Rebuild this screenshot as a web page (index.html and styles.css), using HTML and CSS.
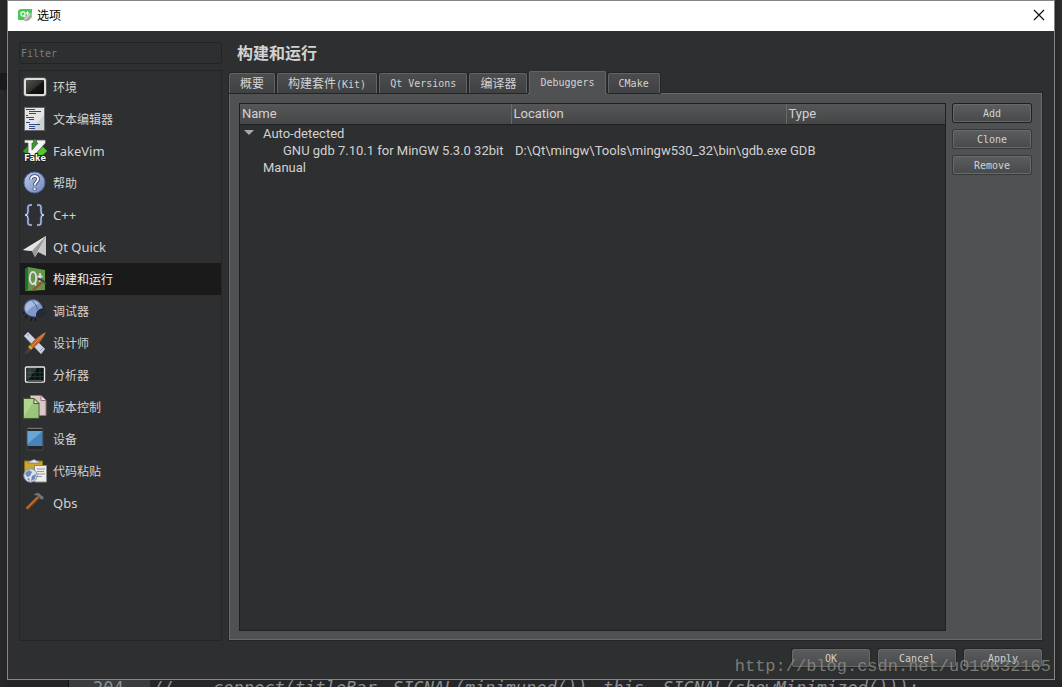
FILE: index.html
```html
<!DOCTYPE html>
<html lang="zh-CN">
<head>
<meta charset="utf-8">
<title>选项</title>
<link rel="stylesheet" href="styles.css">
</head>
<body>
<div class="gutter-mark"></div>
<section class="dialog" aria-label="选项">
  <header class="titlebar">
    <svg class="app-icon" viewBox="0 0 16 16"><path d="M3 2h12v8l-3 3H1V4z" fill="#41cd52"/><circle cx="6" cy="7" r="2.1" fill="none" stroke="#fff" stroke-width="1.2"/><path d="M6.500 8l1.500 2M10.500 4.500v4.500h1M9 6.200h3" fill="none" stroke="#fff" stroke-width="1.200"/><path d="M7 14c0-4 3-7 8-8 0 5-2 9-7 8z" fill="#c9c9c4"/><path d="M7 14c3-2 5-4 8-8-1 6-3 8-8 8z" fill="#a3a39f"/></svg>
    <h1 class="titlebar-text">选项</h1>
    <button class="close" aria-label="Close"><svg viewBox="0 0 12 12"><path d="M1 1l10 10M11 1L1 11" stroke="#111" stroke-width="1.200"/></svg></button>
  </header>
  <div class="content">
    <aside class="sidebar">
      <input class="filter" type="text" placeholder="Filter" aria-label="Filter">
      <nav class="pages">
        <a class="page" href="#env"><svg viewBox="0 0 24 24"><defs><linearGradient id="scr" x2="1" y2="1"><stop stop-color="#555"/><stop offset=".5" stop-color="#303030"/><stop offset=".55" stop-color="#161616"/><stop offset="1" stop-color="#080808"/></linearGradient></defs><rect x=".5" y="2.500" width="23" height="19" rx="3" fill="#777"/><rect x="2" y="4" width="20" height="16" rx="2" fill="url(#scr)" stroke="#deded9" stroke-width="2"/></svg>环境</a>
        <a class="page" href="#editor"><svg viewBox="0 0 24 24"><rect x="1.500" y=".5" width="20" height="23" fill="#e4e4e4" stroke="#666"/><path d="M21 8v15H8z" fill="#cfcfcf"/><path d="M3 2.500h9M6 4.500h12M6 6.500h7M3 8.500h2M3 10.500h8M6 12.500h5M3 15.500h4M6 17.500h11M6 19.500h6M6 21.500h6" stroke="#2e4a84"/></svg>文本编辑器</a>
        <a class="page latin" href="#vim"><svg viewBox="0 0 24 24"><path d="M12 0l12 12-12 12L0 12z" fill="#28a51c"/><path d="M15 3l9 9-9 8z" fill="#52c82e"/><path d="M1.500 1h9v3H9v7l6-7h-1.500V1h9v3L11 17H5V4H1.500z" fill="#f4f4f4" stroke="#555" stroke-width=".8"/><text class="vim-label" x="12" y="21.500" text-anchor="middle">Fake</text></svg>FakeVim</a>
        <a class="page" href="#help"><svg viewBox="0 0 24 24"><defs><linearGradient id="ball" x2="1" y2="1"><stop stop-color="#bdcbea"/><stop offset="1" stop-color="#6f87bd"/></linearGradient></defs><circle cx="11.500" cy="11.500" r="10.500" fill="url(#ball)" stroke="#52699e"/><path d="M8 8.500c0-5 8-4.500 7 .2-.4 2.300-3.400 2.800-3.400 5.800M11.600 16.800v2.400" fill="none" stroke="#30415f" stroke-width="3.600"/><path d="M8 8.500c0-5 8-4.500 7 .2-.4 2.300-3.400 2.800-3.400 5.500M11.600 17v2" fill="none" stroke="#f5f7fb" stroke-width="2"/></svg>帮助</a>
        <a class="page latin" href="#cpp"><svg viewBox="0 0 24 24"><path d="M9 2H7Q5 2 5 4v5q0 3-3 3 3 0 3 3v5q0 2 2 2h2M14 2h2q2 0 2 2v5q0 3 3 3-3 0-3 3v5q0 2-2 2h-2" fill="none" stroke="#465a8a" stroke-width="2.600"/><path d="M9 2H7Q5 2 5 4v5q0 3-3 3 3 0 3 3v5q0 2 2 2h2M14 2h2q2 0 2 2v5q0 3 3 3-3 0-3 3v5q0 2-2 2h-2" fill="none" stroke="#d9e2f3"/></svg>C++</a>
        <a class="page latin" href="#quick"><svg viewBox="0 0 24 24"><path d="M23 1v20l-8-4-3 5-3-6-9-1z" fill="#c7c7c5"/><path d="M23 1L0 15l9 1z" fill="#e5e5e3"/><path d="M23 1L9 16l3 6z" fill="#999"/><path d="M23 1l-8 16-3 5z" fill="#efefed"/></svg>Qt Quick</a>
        <a class="page selected" href="#build" aria-current="page"><svg viewBox="0 0 24 24"><path d="M2 2l3-2 17 3v20L2 24z" fill="#5f9b45"/><path d="M2 2l3-2v23l-3 1z" fill="#13752e"/><path d="M5 1l16 3v17L5 23z" fill="#65934f"/><ellipse cx="10" cy="11" rx="3.200" ry="6" fill="none" stroke="#d9ddd5" stroke-width="2"/><path d="M11 15l3 5M17 6v9M14.500 9.500h5" stroke="#d9ddd5" stroke-width="1.800"/><path d="M10 23l9-8" stroke="#9c532b" stroke-width="2.500"/><path d="M15 12q4 0 8 5" fill="none" stroke="#444" stroke-width="2"/></svg>构建和运行</a>
        <a class="page" href="#debugger"><svg viewBox="0 0 24 24"><path d="M2 12l-2 3M5 16l-3 3M9 18l-1 4M13 18l-1 4M20 9l1-2" stroke="#16191e" stroke-width="1.300"/><path d="M1 10Q1 3 7 1q6-2 10 3 4 4 3 8l-6 6Q5 18 2 13z" fill="#8098ca" stroke="#43547d" stroke-width=".8"/><path d="M2 10Q2 4 8 2q5-1 8 3-7 1-12 8z" fill="#a9bbdf"/><path d="M9 1.500Q14 6 15 11" fill="none" stroke="#52658f"/><path d="M13 18q-1-7 7-9l3 4 1 3-4 1-2 2z" fill="#222a37"/></svg>调试器</a>
        <a class="page" href="#designer"><svg viewBox="0 0 24 24"><path d="M5 1l17 17-4 5L1 5z" fill="#cbd3e3" stroke="#8490a6" stroke-width=".7"/><path d="M20 17l-3 3M6 3L4 5" stroke="#8a96ad"/><path d="M23 1Q14 5 7 14l3 3Q19 11 23 1" fill="#b8642b"/><path d="M22 2L9 15" stroke="#dc925c"/><path d="M7 14l3 3-2 2-3-3z" fill="#d7a734"/><path d="M5 16l3 3q-2 4-8 4 4-2 5-7" fill="#45413b"/></svg>设计师</a>
        <a class="page" href="#analyzer"><svg viewBox="0 0 24 24"><rect x="2.500" y="4" width="19" height="15" rx="1" fill="#0d1314" stroke="#e8e8e8" stroke-width="1.400"/><path d="M4 19l1-1h14l2 1" stroke="#aaa"/><path d="M7 5v13M12 5v13M17 5v13M4 9.500h16M4 13.500h16" stroke="#264644" stroke-width=".6"/><path d="M4 5h10L5 17H4z" fill="#fff" opacity=".15"/></svg>分析器</a>
        <a class="page" href="#vcs"><svg viewBox="0 0 24 24"><path d="M7.500.5H18l5 5v15H7.500z" fill="#ddc6c8" stroke="#8c7678"/><path d="M18 .5v5h5" fill="#f2e4e5" stroke="#8c7678"/><path d="M.5 3.500H11l5 5v14.800H.5z" fill="#b2d58c" stroke="#405c2d"/><path d="M1 22L12 4l3 5v13z" fill="#8fbd73" opacity=".65"/><path d="M11 3.500v5h5z" fill="#e1efcd" stroke="#405c2d"/></svg>版本控制</a>
        <a class="page" href="#devices"><svg viewBox="0 0 24 24"><rect x="4" y="1" width="16" height="22" rx="1" fill="#25272a" stroke="#4f5356" stroke-width=".7"/><rect x="4.500" y="4" width="15" height="15" fill="#4685bb"/><path d="M4.500 4h15L4.500 17z" fill="#6ba5d3"/><path d="M5 1.500h14" stroke="#71767a"/></svg>设备</a>
        <a class="page" href="#paste"><svg viewBox="0 0 24 24"><rect x="1.500" y="2" width="18" height="14" fill="#cda62b" stroke="#8a6c12"/><path d="M5 4q0-2 3-2 3-3 6 0 3 0 3 2z" fill="#eee" stroke="#777" stroke-width=".8"/><path d="M11.500 6.500H23.500V23H11.500z" fill="#ededed" stroke="#888"/><path d="M14 10h8M14 12.500h7M14 15h8M14 17.500h5" stroke="#999"/><circle cx="7.500" cy="16.500" r="6.700" fill="#d8e0ed" stroke="#8090ac"/><path d="M2 14l4-3 3 2-2 4-3 1zM9 17l4-2-1 5-4 2zM4 20l2-1 1 3z" fill="#7187b0"/></svg>代码粘贴</a>
        <a class="page latin" href="#qbs"><svg viewBox="0 0 24 24"><path d="M4 18L16 6" stroke="#753a16" stroke-width="3.500"/><path d="M3.500 17.500L16 5" stroke="#c86a2b" stroke-width="1.800"/><path d="M11 3q5-3 7 1l3 2-1 3-3-1-2-3-4-1" fill="#72787b" stroke="#36393b" stroke-width=".7"/></svg>Qbs</a>
      </nav>
    </aside>
    <main class="main">
      <h2 class="heading">构建和运行</h2>
      <div class="tabs" role="tablist">
        <button class="tab" role="tab">概要</button>
        <button class="tab" role="tab">构建套件<span class="mono">(Kit)</span></button>
        <button class="tab mono" role="tab">Qt Versions</button>
        <button class="tab" role="tab">编译器</button>
        <button class="tab mono active" role="tab" aria-selected="true">Debuggers</button>
        <button class="tab mono" role="tab">CMake</button>
      </div>
      <div class="panel" role="tabpanel">
        <div class="tree">
          <table class="tree-table">
            <colgroup><col class="col-name"><col class="col-location"><col></colgroup>
            <thead><tr><th>Name</th><th>Location</th><th>Type</th></tr></thead>
            <tbody>
              <tr><td class="group"><svg class="arrow" viewBox="0 0 10 6"><path d="M0 0h10L5 5z" fill="#a9a9a9"/></svg>Auto-detected</td><td></td><td></td></tr>
              <tr><td class="child">GNU gdb 7.10.1 for MinGW 5.3.0 32bit</td><td>D:\Qt\mingw\Tools\mingw530_32\bin\gdb.exe</td><td>GDB</td></tr>
              <tr><td class="leaf">Manual</td><td></td><td></td></tr>
            </tbody>
          </table>
        </div>
        <div class="actions">
          <button class="btn default">Add</button>
          <button class="btn">Clone</button>
          <button class="btn">Remove</button>
        </div>
      </div>
    </main>
  </div>
  <footer class="footer">
    <button class="btn">OK</button>
    <button class="btn">Cancel</button>
    <button class="btn">Apply</button>
  </footer>
</section>
<div class="code-line"><span class="line-no">204</span><span>//</span><span>connect(titleBar,</span><span>SIGNAL(minimuned()),</span><span>this,</span><span>SIGNAL(showMinimized()));</span></div>
<div class="watermark">http://blog.csdn.net/u010632165</div>
</body>
</html>
```
FILE: styles.css
```css
* { box-sizing: border-box; }
body {
  margin: 0;
  height: 100vh;
  display: flex;
  flex-direction: column;
  overflow: hidden;
  position: relative;
  background: linear-gradient(90deg, #29292b, #242426 8px, #242426 calc(100% - 8px), #2c2d2f);
  color: #d2d2d2;
  font: 12px "Noto Sans", "Noto Sans CJK SC", sans-serif;
}
button { font: inherit; color: inherit; cursor: default; }
.mono, .btn, .filter { font-family: "DejaVu Sans Mono", monospace; font-size: 10px; }
.gutter-mark { position: absolute; left: 0; top: 73px; width: 7px; height: 17px; background: #1a1a1b; }
.dialog {
  flex: 1;
  min-height: 0;
  margin: 0 7px;
  display: flex;
  flex-direction: column;
  background: #2e2f30;
  border: 1px solid #868484;
}
.titlebar { display: flex; align-items: center; height: 30px; padding: 0 9px 2px; background: #fff; color: #000; }
.app-icon { width: 16px; height: 16px; }
.titlebar-text { flex: 1; margin: 0 0 0 4px; font-size: 12px; font-weight: 400; }
.close { display: flex; padding: 0; border: 0; background: none; }
.close svg { width: 12px; height: 12px; }
.content { flex: 1; min-height: 0; display: flex; gap: 7px; padding: 11px 12px 0 11px; }
.sidebar { width: 203px; display: flex; flex-direction: column; gap: 6px; }
.filter {
  height: 22px;
  padding: 0 1px;
  color: #d2d2d2;
  background: #2e2f30;
  border: 1px solid #232324;
  border-radius: 3px;
  outline: 0;
}
.filter::placeholder { color: #7c7c7c; opacity: 1; }
.pages { flex: 1; margin-bottom: -1px; border: 1px solid #242526; }
.page { display: flex; align-items: center; gap: 6px; height: 32px; padding-left: 3px; color: #d2d2d2; text-decoration: none; }
.page svg { width: 24px; height: 24px; }
.page.selected { color: #eee; background: #1a1a1a; }
.page.latin, .tree-table { font-size: 13px; }
.vim-label { font: 700 9px "DejaVu Sans Mono", monospace; fill: #fff; stroke: #222; stroke-width: 2px; paint-order: stroke; }
.main { flex: 1; min-width: 0; display: flex; flex-direction: column; }
.heading { height: 29px; margin: 0; padding-left: 8px; font-size: 16px; font-weight: 700; line-height: 22px; }
.tabs { position: relative; z-index: 1; display: flex; align-items: flex-end; gap: 2px; height: 22px; }
.tab {
  height: 20px;
  padding: 0 10px;
  line-height: 18px;
  background: linear-gradient(#4b4c4d, #404142);
  border: 1px solid #626364;
  border-bottom: 0;
  border-radius: 2px 2px 0 0;
  box-shadow: 0 0 0 1px #242526;
}
.tab span { line-height: 1; }
.tab.active { height: 23px; margin-bottom: -1px; background: #505152; box-shadow: none; }
.panel {
  flex: 1;
  min-height: 0;
  display: flex;
  gap: 7px;
  padding: 9px 10px 8px 9px;
  background: #505152;
  border: 1px solid #6a6b6c;
  outline: 1px solid #242526;
}
.tree { flex: 1; min-width: 0; background: #2e2f30; border: 1px solid #1f2021; }
.tree-table { width: 100%; table-layout: fixed; border-collapse: collapse; font-family: Roboto, sans-serif; }
.col-name { width: 271px; }
.col-location { width: 275px; }
.tree-table th {
  height: 20px;
  padding: 0 2px;
  font-weight: 400;
  line-height: 19px;
  text-align: left;
  background: linear-gradient(#555657, #454647);
  border-right: 1px solid #68696a;
  border-bottom: 1px solid #202122;
}
.tree-table th:last-child { border-right: 0; }
.tree-table td { height: 17px; padding: 0 4px; line-height: 17px; white-space: nowrap; }
.tree-table .group { padding-left: 4px; }
.tree-table .leaf { padding-left: 23px; }
.tree-table .child { padding: 0 0 0 43px; }
.arrow { width: 10px; height: 6px; margin-right: 9px; vertical-align: 2px; }
.actions { width: 78px; display: flex; flex-direction: column; gap: 8px; padding-top: 1px; }
.btn {
  height: 18px;
  padding: 0;
  background: linear-gradient(#5b5c5e, #484a4b);
  border: 1px solid #68696a;
  border-radius: 2px;
  box-shadow: 0 0 0 1px #37383a;
}
.btn.default { box-shadow: 0 0 0 1px #1e1f20; }
.footer { display: flex; justify-content: flex-end; gap: 8px; padding: 9px 12px 12px; }
.footer .btn { width: 78px; box-shadow: 0 0 0 1px #242526; }
.code-line {
  height: 7px;
  margin-left: 68px;
  padding-left: 24px;
  display: grid;
  grid-template-columns: 60px 60px 180px 210px 60px 1fr;
  overflow: hidden;
  border-left: 1px solid #111;
  background: linear-gradient(90deg, #3b3c3e 81px, #262628 81px);
  color: #8b8f94;
  font: italic 17px/16px "DejaVu Sans Mono", monospace;
}
.line-no { font-style: normal; }
.watermark {
  position: absolute;
  right: 11px;
  bottom: 10px;
  color: #8e8e84;
  opacity: .8;
  font: 17px/20px "Liberation Mono", monospace;
  pointer-events: none;
}
```
